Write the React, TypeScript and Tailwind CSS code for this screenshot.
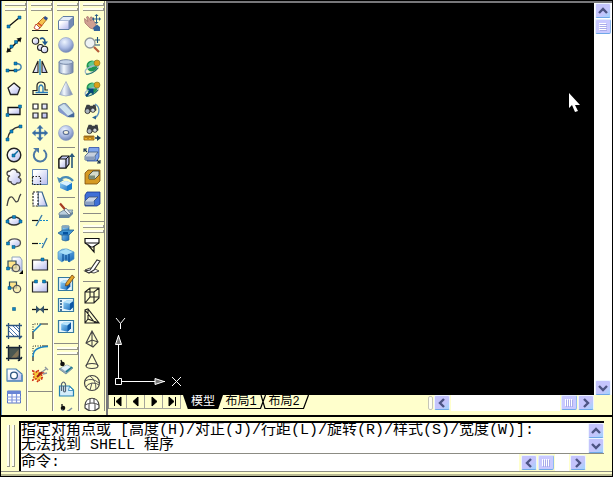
import React from 'react';

const Node = ({ x, y }: { x: number; y: number }) => (
  <path d={`M${x - 1.5} ${y - 1.5}h3v3h-3z`} fill="#0b86c2" stroke="#064a78" strokeWidth="0.5" />
);

const Gradients = () => (
  <svg width="0" height="0" className="absolute" aria-hidden="true">
    <defs>
      <linearGradient id="face" x1="0" y1="0" x2="1" y2="1">
        <stop offset="0.2" stopColor="#ffffff" />
        <stop offset="1" stopColor="#b4b9ee" />
      </linearGradient>
      <linearGradient id="metal" x1="0" y1="0" x2="1" y2="0">
        <stop offset="0" stopColor="#8ea3c4" />
        <stop offset="0.35" stopColor="#f4f9ff" />
        <stop offset="1" stopColor="#6c7ea8" />
      </linearGradient>
      <radialGradient id="ball" cx="0.4" cy="0.3" r="0.7">
        <stop offset="0" stopColor="#eef5ff" />
        <stop offset="0.6" stopColor="#a9b9e2" />
        <stop offset="1" stopColor="#6f84b4" />
      </radialGradient>
      <linearGradient id="blue" x1="0" y1="0" x2="1" y2="1">
        <stop offset="0" stopColor="#9bd8f8" />
        <stop offset="1" stopColor="#0d62b8" />
      </linearGradient>
    </defs>
  </svg>
);

const drawIcons: [string, React.ReactNode][] = [
  ['Line', <><path d="M3 13 15 3" stroke="#111" strokeWidth="1.3" /><Node x={3.5} y={12.5} /><Node x={14.5} y={3.5} /></>],
  ['Construction Line', <><path d="M2 16 16 2" stroke="#111" strokeWidth="1.4" /><path d="M1.500 16.500l1-5 4 4zM16.500 1.500l-5 1 4 4z" fill="#111" /><Node x={6.5} y={10.5} /><Node x={11} y={6} /></>],
  ['Polyline', <><path d="M2.500 12.500h8" stroke="#222" strokeWidth="1.4" /><path d="M10.500 12.500c7.500 0 7.500-7 0-7" stroke="#3d7fae" strokeWidth="1.4" /><Node x={2.5} y={12.5} /><Node x={10.5} y={12.5} /><Node x={10.5} y={5.5} /></>],
  ['Polygon', <path d="M9 3 15 8l-2.500 6.500h-7L3 8z" fill="url(#face)" stroke="#222" strokeWidth="1.3" />],
  ['Rectangle', <><path d="M3 5.5h12v7H3z" fill="url(#face)" stroke="#111" strokeWidth="1.3" /><Node x={15} y={4.5} /><Node x={2.5} y={13} /></>],
  ['Arc', <><path d="M2.5 15C4 7.500 8 3.500 15 2.500" stroke="#333" strokeWidth="1.3" /><Node x={2.5} y={15.5} /><Node x={6.5} y={7.5} /><Node x={15.5} y={2.5} /></>],
  ['Circle', <><circle cx="9" cy="9" r="6.8" fill="url(#face)" stroke="#222" strokeWidth="1.4" /><path d="M9 9l4-4" stroke="#0b6aa2" strokeWidth="1.5" /><Node x={8.5} y={9.5} /></>],
  ['Revision Cloud', <path d="M5 8C1 8 1 3 5 3c2-3 7-2 7 1 4 0 4 5 1 5 5 2 3 7-1 6-2 3-6 1-6-1-4 0-4-5-1-6z" fill="url(#face)" stroke="#444" strokeWidth="1.3" />],
  ['Spline', <path d="M2 16C3 10 4 6 7 7c3 2 3 7 6 4 1-2 1-5 3-7" stroke="#444" strokeWidth="1.3" />],
  ['Ellipse', <><ellipse cx="9" cy="9" rx="6.5" ry="4" fill="url(#face)" stroke="#333" strokeWidth="1.4" /><Node x={2.5} y={9.500} /><Node x={15.5} y={9.5} /><Node x={9} y={5} /></>],
  ['Ellipse Arc', <><ellipse cx="9.500" cy="8.500" rx="6" ry="4" fill="url(#face)" /><path d="M3.500 9C3 3.500 16 3.500 15.5 9c0 3-3 4-7 4" stroke="#555" strokeWidth="1.3" /><Node x={3} y={9.500} /><Node x={8.500} y={13} /></>],
  ['Insert Block', <><path d="M7 1h8l2 3v11H7z" fill="url(#face)" stroke="#8ea3be" /><path d="M3 5h8v7H3z" fill="#ffe58a" stroke="#2b4a5c" strokeWidth="1.2" /><circle cx="11" cy="12" r="3.700" fill="#f5e7a8" fillOpacity=".7" stroke="#555" strokeWidth="1.2" /><Node x={3} y={12.5} /><path d="M18 14v4h-4z" fill="#000" /></>],
  ['Make Block', <><path d="M4.500 4h7v6h-7z" fill="#ffe58a" stroke="#2b4a5c" strokeWidth="1.2" /><circle cx="12" cy="11" r="3.700" fill="#f5e7a8" fillOpacity=".7" stroke="#555" strokeWidth="1.2" /><Node x={4.500} y={10} /></>],
  ['Point', <Node x={9} y={9} />],
  ['Hatch', <><path d="M3 4h12v10H3z" fill="#fff" /><path d="M4 5l9 9M8 4l7 7M4 9l5 5M11 4l4 4" stroke="#4a76ad" /><path d="M1 3.500h16M1 14.500h16M3.500 1v16M14.500 1v16M14 17l3-3" stroke="#2c5480" strokeWidth="1.300" /></>],
  ['Gradient', <><path d="M3 4h12v10H3z" fill="#4a5751" /><path d="M6 14 15 4v6l-4 4z" fill="#837557" /><path d="M1 3.500h16M1 14.500h16M3.500 1v16M14.500 1v16M13 17l4-4" stroke="#182635" strokeWidth="1.400" /></>],
  ['Region', <><path d="M2 3h9l6 5v7H2z" fill="url(#face)" stroke="#4c83b4" strokeWidth="1.200" /><path d="M2 15h15V9" stroke="#5f8fc0" strokeWidth="1.600" /><circle cx="9" cy="9.500" r="3.400" fill="#fff" stroke="#2d5680" strokeWidth="1.300" /></>],
  ['Table', <><path d="M2.500 3h13v12h-13z" fill="#fff" stroke="#5874c4" /><path d="M2 3h14v3H2z" fill="#6885d5" /><path d="M2 9h14M2 12h14M7 6v9M11.500 6v9" stroke="#8297dc" strokeWidth="1.200" /></>],
];

const modifyIcons: [string, React.ReactNode][] = [
  ['Erase', <><path d="M1 16.500h16" stroke="#222" /><path d="M13 3l3 2-7 9-4-3z" fill="#f5c34e" stroke="#a4570e" strokeWidth=".8" /><path d="M14 2l3 2-1.500 2.500-3-2z" fill="#2c4f91" /><path d="M5 10l4 4-3 2-3-2z" fill="#fff" stroke="#b52a1c" strokeWidth=".8" /><path d="M7 9l4 3" stroke="#d3402a" strokeWidth="1.300" /></>],
  ['Copy', <><circle cx="4.500" cy="5" r="3.200" fill="url(#face)" stroke="#222" strokeWidth="1.100" /><circle cx="9.500" cy="11.500" r="3" fill="url(#face)" stroke="#222" strokeWidth="1.100" /><circle cx="13.500" cy="13.500" r="3.200" fill="url(#face)" stroke="#222" strokeWidth="1.100" /><path d="M9 3c3-2 5 0 5 3" stroke="#1c578f" strokeWidth="1.600" /><path d="M11 5.500h6l-3 4z" fill="#1c578f" /></>],
  ['Mirror', <><path d="M7 3v11.500H2zM11 3v11.500h5z" fill="url(#face)" stroke="#222" strokeWidth="1.100" /><path d="M9 1v16" stroke="#1689c7" strokeWidth="1.400" /></>],
  ['Offset', <><path d="M17 14.500H2v-4h4V6q0-4 4-4t4 4v4h3" stroke="#222" strokeWidth="1.200" /><path d="M17 12.500H4.500M8 12V7q2-4 4 0v5" stroke="#2679b9" strokeWidth="1.300" /></>],
  ['Array', <path d="M2 2h5v5H2zM11 2h5v5h-5zM2 11h5v5H2zM11 11h5v5h-5z" fill="url(#face)" stroke="#222" strokeWidth="1.200" />],
  ['Move', <path d="M9 1l3 3.500h-2V8h3.500V6L17 9l-3.500 3v-2H10v3.500h2L9 17l-3-3.500h2V10H4.500v2L1 9l3.500-3v2H8V4.500H6z" fill="#35699d" stroke="#6f9ac1" strokeWidth=".5" />],
  ['Rotate', <><path d="M12.500 4A6.300 6.300 0 1 1 5 4.500" stroke="#4b78a4" strokeWidth="2" /><path d="M2 2h6v5z" fill="#4b78a4" /></>],
  ['Scale', <><path d="M1.500 1.500h15v15h-15z" fill="url(#face)" stroke="#6288b3" /><path d="M1.500 8.500h8v8h-8z" stroke="#222" strokeWidth="1.200" strokeDasharray="1.500 1.500" /></>],
  ['Stretch', <><path d="M7 2h4l5 14H7z" fill="url(#face)" stroke="#386590" strokeWidth="1.200" /><path d="M2 2h5v14H2z" fill="#fff" stroke="#222" strokeWidth="1.200" strokeDasharray="2 1.200" /></>],
  ['Trim', <><path d="M1 8.500h6" stroke="#111" strokeWidth="1.200" /><path d="M9 8.500h8" stroke="#1689c7" strokeWidth="1.200" strokeDasharray="2 1" /><path d="M5 14 11 3" stroke="#3c7dab" strokeWidth="1.400" /></>],
  ['Extend', <><path d="M1 9.500h6" stroke="#111" strokeWidth="1.200" /><path d="M8 9.500h4" stroke="#1689c7" strokeWidth="1.200" strokeDasharray="2 1" /><path d="M11 14l5-10" stroke="#3c7dab" strokeWidth="1.400" /></>],
  ['Break at Point', <><path d="M1.500 4h15v10h-15z" fill="url(#face)" stroke="#222" strokeWidth="1.200" /><Node x={11.500} y={3.500} /></>],
  ['Break', <><path d="M5 4H1.500v10h15V4H13" fill="url(#face)" stroke="#222" strokeWidth="1.200" /><Node x={5} y={3.500} /><Node x={13} y={3.500} /></>],
  ['Join', <><path d="M1 9.500h16" stroke="#111" strokeWidth="1.300" /><path d="M5 5.500l4 4-4 4zM13 5.500l-4 4 4 4z" fill="#35556b" /></>],
  ['Chamfer', <><path d="M2 17V9M9 2h8" stroke="#222" strokeWidth="1.200" /><path d="M2 8V2h7" stroke="#111" strokeDasharray="1 1.500" /><path d="M2 10 10 2" stroke="#1683c5" strokeWidth="1.400" /></>],
  ['Fillet', <><path d="M2 17v-5M11 2h6" stroke="#222" strokeWidth="1.200" /><path d="M2 10V2h9" stroke="#111" strokeDasharray="1 1.500" /><path d="M2 13C2 6 6 3 17 2.500" stroke="#1683c5" strokeWidth="1.500" /></>],
  ['Explode', <><path d="M2 5l3 1 2-2 1 3h4l-2 3 2 3-3 0-2 3-2-3-3 1 1-4z" fill="#f4c637" stroke="#cf2a18" strokeWidth="1.700" strokeDasharray="1.500 1.500" /><path d="M6 11l5-5" stroke="#a02113" strokeWidth="2" /><path d="M11 6l4-3M12 8l4-1M14 1l3 3" stroke="#8d979f" strokeWidth="1.400" /></>],
];

const Cube = () => (
  <>
    <path d="M2 6l5-3 9 1v8l-5 5-9-2z" fill="url(#blue)" />
    <path d="M2 6l5-3 9 1-5 4z" fill="#b9e4fb" />
    <path d="M11 8l5-4v8l-5 5z" fill="#0d57a3" />
  </>
);

const solidIcons: [string, React.ReactNode][] = [
  ['Box', <><path d="M1.500 7 6 2.500h10.500V11L12 15.500H1.500z" fill="#7389b4" stroke="#5f7ca3" /><path d="M2 7h9.500v8H2z" fill="url(#face)" /><path d="M2.500 6.500 6 3h10l-4 3.500z" fill="#e4edf8" /></>],
  ['Sphere', <circle cx="9" cy="9" r="7.500" fill="url(#ball)" stroke="#8e9dc2" strokeWidth=".6" />],
  ['Cylinder', <><path d="M2 4v10.500q7 3.500 14 0V4z" fill="url(#metal)" stroke="#7688a8" /><ellipse cx="9" cy="4" rx="7" ry="2.300" fill="#c4d3e8" stroke="#7688a8" /></>],
  ['Cone', <path d="M9 1.500 2.500 14.500q6.500 3 13 0z" fill="url(#metal)" stroke="#9aa7be" strokeWidth=".7" />],
  ['Wedge', <><path d="M1.500 9V4L6 1.500h3L17 11v4h-5z" fill="#9aacc9" stroke="#7088a8" strokeWidth=".8" /><path d="M2 5l5-3 9 9-5 3z" fill="#cfe3ee" /><path d="M2 5v5l9 5.500V14z" fill="#8398cb" /><path d="M11 14l6-3v4h-6z" fill="#44679a" /></>],
  ['Torus', <><circle cx="9" cy="9" r="7.500" fill="url(#ball)" stroke="#8e9dc2" strokeWidth=".6" /><ellipse cx="9" cy="8.500" rx="2.800" ry="2" fill="#f4f1dd" stroke="#5d7199" strokeWidth="1.200" /></>],
];

const solidOpIcons: [string, React.ReactNode][] = [
  ['Extrude', <><path d="M2 7l3-3h7v8l-3 4H2z" fill="#c3c9f3" stroke="#111" strokeWidth="1.200" /><path d="M2 7h7v9H2z" fill="url(#face)" stroke="#111" strokeWidth="1.200" /><path d="M9 7l3-3" stroke="#111" /><path d="M15 16V4" stroke="#28577b" strokeWidth="1.600" /><path d="M15 1l3 4h-6z" fill="#28577b" /></>],
  ['Revolve', <><path d="M3 9l6-2 6 2v6l-5 2-7-3z" fill="url(#blue)" /><path d="M3 9l6-2 6 2-5 3z" fill="#d8f1ff" /><path d="M10 12l5-3v6l-5 2z" fill="#1a7ccd" /><path d="M3 6c3-4 9-4 13 1" stroke="#4a8cb6" strokeWidth="2.300" /><path d="M0 3l2 6 5-3z" fill="#4a8cb6" /></>],
];

const sliceIcons: [string, React.ReactNode][] = [
  ['Slice', <><path d="M2 11l5-3h9l-4 5H2z" fill="#b9cede" stroke="#6b8499" strokeWidth=".8" /><path d="M2 13h10l4-4v3l-4 4H2z" fill="#6787a2" /><path d="M3 1.500l6 7" stroke="#a63b22" strokeWidth="2.200" /><path d="M9 6l5 6-2 1-5-5z" fill="#e6edf3" stroke="#55616d" strokeWidth=".7" /></>],
  ['Section', <><path d="M5 2h7v14q-3 2-7 0z" fill="url(#blue)" stroke="#31658c" strokeWidth=".7" /><path d="M1 9l5-3h11l-5 5H4z" fill="#3f94d3" stroke="#246090" strokeWidth=".8" /><ellipse cx="8.500" cy="2.500" rx="3.500" ry="1.500" fill="#86a8be" /><path d="M6 8h5v2.500H6z" fill="#0453a0" /></>],
  ['Interfere', <><path d="M1 6q4-4 9-3l7 3v7l-5 3-3-3-4 3-4-3z" fill="url(#blue)" stroke="#4a90c6" strokeWidth=".7" /><path d="M9 7v8M6 8v7M12 8v8" stroke="#0a4e95" strokeWidth="1.200" /><path d="M2 6l7-3 7 3-7 3z" fill="#a7dff8" /></>],
];

const setupIcons: [string, React.ReactNode][] = [
  ['Setup Drawing', <><path d="M1.500 3.500h14v13h-14z" fill="#e7f6fc" stroke="#35799f" strokeWidth="1.200" /><g transform="translate(2 4) scale(.7)"><Cube /></g><path d="M15 1l2.500 2-6 8-3 1 .500-3z" fill="#e3a328" stroke="#754413" strokeWidth=".8" /></>],
  ['Setup View', <><path d="M1.500 2.500h15v13h-15z" fill="#e7f6fc" stroke="#35799f" strokeWidth="1.200" /><path d="M3 5h2M3 8h2M3 11h2M3 14h2" stroke="#174e7d" strokeWidth="1.300" /><g transform="translate(5 2) scale(.72)"><Cube /></g></>],
  ['Setup Profile', <><path d="M1.500 2.500h15v12h-15z" fill="#e7f6fc" stroke="#35799f" strokeWidth="1.200" /><g transform="translate(2.800 1.800) scale(.7)"><Cube /></g></>],
];

const brushIcons: [string, React.ReactNode][] = [
  ['Materials', <><path d="M2 11l8-4 6 3-7 6z" fill="#93aabb" stroke="#6b8799" strokeWidth=".8" /><path d="M4 10l6-3 4 2-6 4z" fill="#e5f2fb" /><path d="M4 2l1 3" stroke="#111" strokeWidth="1.300" /><circle cx="5.500" cy="6" r="2.300" fill="#111" /><path d="M9 14l6-5" stroke="#167b91" strokeWidth="1.600" /></>],
  ['Paste Sheet', <><path d="M2.500 6h10l4 4v6h-14z" fill="#d4edfb" stroke="#2481b4" strokeWidth="1.200" /><path d="M4.500 11V4q2-4 4 0v7q-1 2-2 0V6" stroke="#536273" strokeWidth="1.200" /><path d="M11.500 10.500h5l-4-4z" fill="#fff" stroke="#2481b4" strokeWidth=".8" /></>],
  ['Render', <><path d="M5 2v2" stroke="#111" strokeWidth="1.300" /><circle cx="6" cy="6" r="2.300" fill="#111" /><path d="M5 8l4 3 6-5" stroke="#8094a5" strokeWidth="1.600" /><path d="M10 9l3 3 3 4" stroke="#b7312a" strokeWidth="1.600" strokeDasharray="2 1" /></>],
];

const Planet = () => (
  <>
    <circle cx="9" cy="8" r="5.500" fill="#1f9552" />
    <path d="M5 7q2-4 6-4l1 4-4 3z" fill="#5fc890" />
    <path d="M3 15.500C0 12 6 9 10 8s6 0 5 2c-2 3-9 7-12 5.500z" stroke="#9fb9c9" strokeWidth="1.300" />
    <path d="M3 16c3 1 9-2 12-6" stroke="#1b6e62" strokeWidth="1.100" />
    <circle cx="14" cy="5" r="3" fill="#dba01a" stroke="#7b7420" strokeWidth=".6" />
  </>
);

const Binoculars = () => (
  <>
    <path d="M2 7l2-5h3l1 1h3V2h3l1 6-3 2-3-1-2 2H4z" fill="#3b4043" />
    <circle cx="5" cy="9" r="2.800" fill="#a9b3bb" stroke="#222" strokeWidth=".9" />
    <circle cx="11" cy="8" r="2.400" fill="#ccd4da" stroke="#222" strokeWidth=".9" />
  </>
);

const viewIcons: [string, React.ReactNode][] = [
  ['3D Pan', <><path d="M1.500 4.500 5 7.500 3.500 3l1.500-.500L8 7 7.500 3 9 3l3 6 1 2-3 4-3-1-5-5z" fill="#d0a091" stroke="#a06c66" strokeWidth=".7" /><path d="M10 14l4-3.500 3 2.500v4h-6z" fill="#34629a" /><path d="M13.500 1.500v7M10 5h7" stroke="#285d87" /><path d="M13.500 0l2 2h-4zM13.500 10l2-2h-4zM9 5l2-2v4zM18 5l-2-2v4z" fill="#285d87" /></>],
  ['3D Zoom', <><circle cx="7" cy="7" r="5" fill="#edf2f3" stroke="#8f9799" strokeWidth="1.300" /><path d="M11 11l5 5" stroke="#b65a38" strokeWidth="2.200" /><path d="M14.500 1v6M12 4h5M12 9h5" stroke="#194d77" strokeWidth="1.100" /></>],
  ['3D Orbit', <Planet />],
  ['3D Continuous Orbit', <><Planet /><path d="M3 16l5-5" stroke="#07457c" strokeWidth="2.200" /><path d="M4 8.500h6.500V15z" fill="#07457c" /></>],
  ['3D Swivel', <><g transform="translate(0 1) scale(.9)"><Binoculars /></g><path d="M12 2c5.500 3 5 10 0 14" stroke="#5b90bd" strokeWidth="1.300" /><path d="M9 15.500l4-2v4z" fill="#2b6796" /></>],
  ['3D Adjust Distance', <><g transform="translate(2 -1) scale(.9)"><Binoculars /></g><path d="M1 12h10v4H1z" fill="#f2b429" stroke="#84500a" strokeWidth=".8" /><path d="M3 12v2M5 12v3M7 12v2M9 12v3" stroke="#5e3907" strokeWidth=".8" /><path d="M12 14h3" stroke="#173d5d" strokeWidth="1.500" /><path d="M14 11l4 3-4 3z" fill="#173d5d" /></>],
  ['3D Adjust Clip Planes', <><path d="M6 1.500h10V11l-2 4H4z" fill="#7da4ea" stroke="#294bab" strokeWidth=".8" /><path d="M2 10l4-4h9l-3 4v4H2z" fill="#c6d0dd" stroke="#435d82" strokeWidth=".8" /><path d="M2 10.500h9V14H2z" fill="#8a9dba" /><path d="M1 3l3 3M17 17l-3-3M1 6V3h3M17 14v3h-3" stroke="#152f4c" strokeWidth="1.100" /></>],
  ['Front Clip On/Off', <><path d="M2 5l3-3h12v11l-3 3H2z" fill="#d59a22" stroke="#7a4b0b" strokeWidth=".8" /><path d="M6 7l4-4h6v4l-4 4H6z" fill="#d5dcca" stroke="#343e34" strokeWidth=".8" /><path d="M6 7.500h6V11H6z" fill="#7b8c76" /></>],
  ['Back Clip On/Off', <><path d="M4 2h13v12l-3 2H2V5z" fill="#3f70d6" stroke="#17348e" strokeWidth=".8" /><path d="M2 11l4-4h9l-4 4v4H2z" fill="#cad5e4" stroke="#3a506e" strokeWidth=".8" /><path d="M3 11.500h8V15H3z" fill="#8aa0c4" /></>],
];

const surfaceIcons: [string, React.ReactNode][] = [
  ['2D Solid', <><path d="M2 2.500h14V7l-6 4H8L2 7z" fill="#fff" stroke="#111" strokeWidth="1.200" /><path d="M2 7h14M5 9l6 7v-6" stroke="#111" strokeWidth="1.200" /></>],
  ['3D Face', <><path d="M2 12l5-2 5 1 4 2-5 2-5-1z" fill="#fff" stroke="#333" strokeWidth=".9" /><path d="M7 12l7-10 3 1-6 9-5 3-4-2z" fill="#fff" stroke="#333" strokeWidth="1.100" /></>],
];

const meshIcons: [string, React.ReactNode][] = [
  ['Surface Box', <path d="M2 6l5-4h9v10l-5 5H2zM2 6h9l5-4M11 6v11M7 2v9l-5 6M7 11h9" stroke="#222" strokeWidth="1.100" />],
  ['Surface Wedge', <path d="M2 2v13h14L5 1zM2 2l10 13M5 2v9l11 4M2 15l3-4" stroke="#222" strokeWidth="1.100" />],
  ['Pyramid', <path d="M9 1 3 13l7 4 5-5zM9 1v16M3 13l6-3 6 2" stroke="#444" strokeWidth="1.100" />],
  ['Surface Cone', <><path d="M9 2 3 14M9 2l6 12" stroke="#444" strokeWidth="1.100" /><ellipse cx="9" cy="14" rx="6" ry="2.500" stroke="#444" strokeWidth="1.100" /></>],
  ['Surface Sphere', <><circle cx="9" cy="9" r="7.500" stroke="#444" strokeWidth="1.200" /><path d="M7 2q6 4 6 13M2 7q7-4 14 2M9 9Q4 10 3 13M9 9l-2 7M9 9q5 0 7 2" stroke="#555" /></>],
  ['Dome', <><path d="M2 9C3 0 15 0 16 9v3q-7 6-14 0z" fill="#fff" stroke="#444" strokeWidth="1.200" /><path d="M2 9q7-4 14 0M7 2v5M11 2v5M6 8v7M12 8v7" stroke="#444" /></>],
];

const Tools = ({ items }: { items: [string, React.ReactNode][] }) => (
  <>
    {items.map(([name, drawing]) => (
      <button key={name} title={name} className="flex h-[22px] w-full shrink-0 items-center justify-center">
        <svg width="18" height="18" viewBox="0 0 18 18" fill="none">{drawing}</svg>
      </button>
    ))}
  </>
);

const Toolbar = ({ children }: { children: React.ReactNode }) => (
  <div className="flex shrink-0 flex-col border-b border-[#8c8c84] pb-[5px]">
    <div className="flex h-[11px] shrink-0 flex-col gap-[2px] pt-[2px] pl-[3px]">
      <div className="h-[3px] border-r border-b border-[#99998c] bg-[#fffff2]" />
      <div className="h-[3px] border-r border-b border-[#99998c] bg-[#fffff2]" />
    </div>
    {children}
  </div>
);

const Separator = () => (
  <div className="flex h-[6px] shrink-0 items-center px-[3px]">
    <div className="h-px w-full bg-[#8c8c84]" />
  </div>
);

const Column = ({ children }: { children: React.ReactNode }) => (
  <div className="flex w-[25px] flex-col gap-px overflow-hidden border-r border-[#8c8c84] bg-[#ffffcc]">{children}</div>
);

const arrows = {
  up: 'M3 9l4-4 4 4',
  down: 'M3 5l4 4 4-4',
  left: 'M9 3 5 7l4 4',
  right: 'M5 3l4 4-4 4',
};

const ScrollButton = ({ dir }: { dir: keyof typeof arrows }) => (
  <button aria-label={`Scroll ${dir}`} className="flex h-[15px] w-4 shrink-0 items-center justify-center rounded-[2px] border border-[#eef4ff] border-b-[#6fa8e8] bg-linear-to-br from-[#c4c4fc] from-60% to-[#9fd4fc]">
    <svg width="14" height="14" viewBox="0 0 14 14" fill="none" className="shrink-0">
      <path d={arrows[dir]} stroke="#4d5484" strokeWidth="2.4" />
    </svg>
  </button>
);

const Thumb = ({ vertical }: { vertical?: boolean }) => (
  <div className="flex h-[15px] w-4 shrink-0 items-center justify-center rounded-[2px] border border-[#e2ecff] border-r-[#8fbaf0] border-b-[#6fa8e8] bg-[#c9c9ff]">
    <svg width="8" height="8" viewBox="0 0 8 8" stroke="#fff">
      <path d={vertical ? 'M0 .5h7M0 2.500h7M0 4.500h7M0 6.500h7' : 'M.5 0v7M2.500 0v7M4.500 0v7M6.500 0v7'} />
      <path d={vertical ? 'M1 1.500h7M1 3.500h7M1 5.500h7M1 7.500h7' : 'M1.500 1v7M3.500 1v7M5.500 1v7M7.500 1v7'} stroke="#a9abea" />
    </svg>
  </div>
);

const UcsIcon = () => (
  <svg width="76" height="72" viewBox="0 0 76 72" fill="none" stroke="#fff">
    <path d="M4 4l4.500 5.500V15M13 4 8.500 9.500" />
    <path d="M6.500 21v43M9 67.500h44" />
    <path d="M3.500 64.500h6v6h-6z" />
    <path d="M6.500 21.500l-3 9h6z" fill="#777" />
    <path d="M52 67.500l-9-3v6z" fill="#777" />
    <path d="M60 63l9 9M69 63l-9 9" />
  </svg>
);

const navPaths = [
  ['First tab', 'M2.500 2v9M9 2v9L4 6.500z'],
  ['Previous tab', 'M8 2v9L3 6.500z'],
  ['Next tab', 'M4 2v9l5-4.500z'],
  ['Last tab', 'M9.500 2v9M3 2v9l5-4.500z'],
];

const TabEdge = () => (
  <svg width="7" height="14" viewBox="0 0 7 14" fill="none" className="shrink-0" stroke="#000" strokeWidth="1.200">
    <path d="M6.500 0 1.500 13.500H0M2 0l4 13.500h1" />
  </svg>
);

const TabBar = () => (
  <div className="flex h-[14px] items-stretch border-l border-[#8c8c84] bg-[#ffffcc] text-[12px] leading-[14px]">
    {navPaths.map(([name, d]) => (
      <button key={name} aria-label={name} className="flex w-[18px] shrink-0 items-center justify-center border-r border-b border-[#a5a59a]">
        <svg width="12" height="13" viewBox="0 0 12 13" fill="#000" stroke="#000"><path d={d} /></svg>
      </button>
    ))}
    <button className="ml-[2px] w-10 shrink-0 bg-black text-center text-white [clip-path:polygon(0_0,100%_0,88%_100%,12%_100%)]">模型</button>
    <button className="w-9 shrink-0 border-b border-black text-center">布局1</button>
    <TabEdge />
    <button className="w-9 shrink-0 border-b border-black text-center">布局2</button>
    <svg width="7" height="14" viewBox="0 0 7 14" fill="none" className="shrink-0" stroke="#000" strokeWidth="1.200"><path d="M6.500 0 1.500 13.500H0" /></svg>
  </div>
);

const DrawingArea = () => (
  <main className="ml-px flex min-w-0 flex-1 flex-col border-t-2 border-l-2 border-[#77777a] bg-[#ffffcc]">
    <div className="flex min-h-0 flex-1">
      <div className="relative flex flex-1 items-end bg-black pb-[9px] pl-1">
        <UcsIcon />
        <svg width="12" height="20" viewBox="0 0 12 20" className="absolute top-[90px] right-[13px]">
          <path d="M0 0v15l3-3 3 7 3-1-3-6h5z" fill="#fff" />
        </svg>
      </div>
      <div className="flex flex-col gap-px bg-white px-px">
        <ScrollButton dir="up" />
        <Thumb vertical />
        <div className="flex-1" />
        <ScrollButton dir="down" />
      </div>
    </div>
    <div className="mb-1 flex h-4 justify-between">
      <TabBar />
      <div className="mr-[18px] flex w-[166px] gap-px">
        <div className="my-px w-[5px] rounded-[2px] border border-[#c6c6b8] bg-[#fffff0]" />
        <ScrollButton dir="left" />
        <div className="flex-1 bg-white" />
        <Thumb />
        <ScrollButton dir="right" />
      </div>
    </div>
  </main>
);

const CommandWindow = () => (
  <section className="flex border-t-2 border-black bg-[#ffffcc] pt-1 pr-2 pl-[6px] text-[15px]">
    <div className="my-1 mr-1 flex w-2 shrink-0 gap-[2px]">
      <div className="w-[3px] border-r border-b border-[#99998c] bg-[#fffff2]" />
      <div className="w-[3px] border-r border-b border-[#99998c] bg-[#fffff2]" />
    </div>
    <div className="min-w-0 flex-1 border-l-2 border-black">
      <div className="flex border-t-2 border-b border-t-black border-b-[#8c8c84] bg-white">
        <div role="log" className="min-w-0 flex-1 leading-[15px] whitespace-nowrap">
          <p>指定对角点或 [高度(H)/对正(J)/行距(L)/旋转(R)/样式(S)/宽度(W)]:</p>
          <p>无法找到 SHELL 程序</p>
        </div>
        <div className="flex flex-col">
          <ScrollButton dir="up" />
          <ScrollButton dir="down" />
        </div>
      </div>
      <div className="flex h-[17px] bg-white">
        <label htmlFor="command" className="leading-[17px]">命令:</label>
        <input id="command" className="min-w-0 flex-1 bg-transparent outline-none" />
        <div className="flex items-center gap-px bg-[#ffffcc] pr-[18px] pl-[2px]">
          <ScrollButton dir="left" />
          <Thumb />
          <div className="h-full w-[14px] bg-white" />
          <ScrollButton dir="right" />
        </div>
      </div>
    </div>
  </section>
);

const App = () => (
  <div className="flex h-screen flex-col overflow-hidden border border-black bg-[#ffffcc] font-['Liberation_Mono','Noto_Sans_CJK_SC',monospace] text-black">
    <Gradients />
    <div className="flex min-h-0 flex-1 border-l border-[#5f8fc0]">
      <nav className="mb-1 flex gap-px overflow-hidden bg-white">
        <Column>
          <Toolbar><Tools items={drawIcons} /></Toolbar>
        </Column>
        <Column>
          <Toolbar><Tools items={modifyIcons} /></Toolbar>
        </Column>
        <Column>
          <Toolbar>
            <Tools items={solidIcons} />
            <Separator />
            <Tools items={solidOpIcons} />
            <Separator />
            <Tools items={sliceIcons} />
            <Separator />
            <Tools items={setupIcons} />
          </Toolbar>
          <Toolbar><Tools items={brushIcons} /></Toolbar>
        </Column>
        <Column>
          <Toolbar>
            <Tools items={viewIcons} />
            <Separator />
          </Toolbar>
          <Toolbar>
            <Tools items={surfaceIcons} />
            <Separator />
            <Tools items={meshIcons} />
          </Toolbar>
        </Column>
      </nav>
      <DrawingArea />
    </div>
    <CommandWindow />
    <footer className="flex h-[5px] shrink-0 flex-col justify-end border-t border-[#8c8c84] bg-[#ffffcc]">
      <div className="h-[2px] bg-[#b8b894]" />
    </footer>
  </div>
);

export default App;
